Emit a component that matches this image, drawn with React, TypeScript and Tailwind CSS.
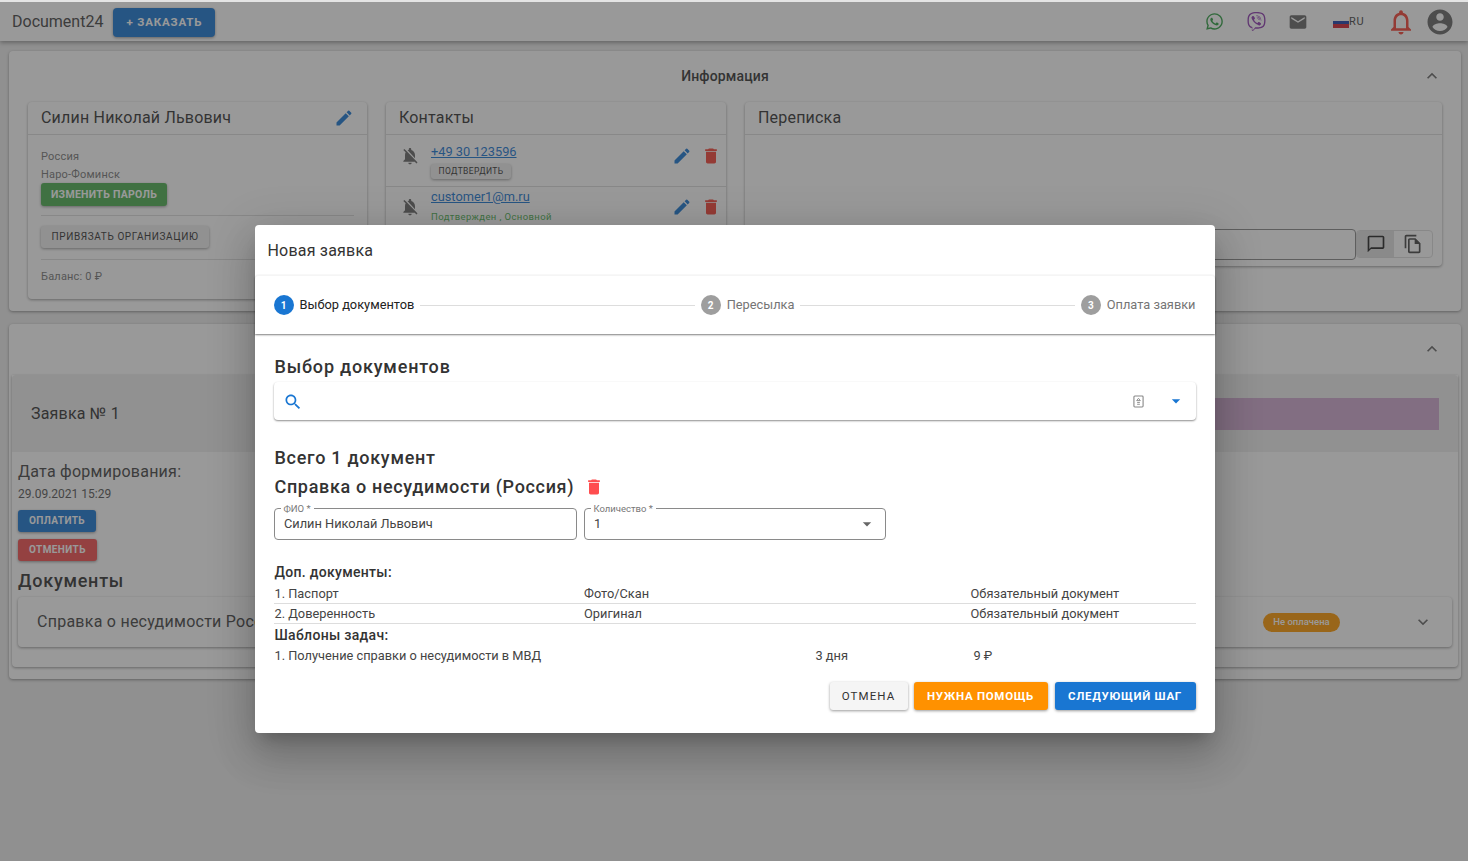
import { FaWhatsapp, FaViber } from 'react-icons/fa';

const paths = {
  edit: 'M3 17.25V21h3.75L17.81 9.94l-3.75-3.75L3 17.25zM20.71 7.04c.39-.39.39-1.02 0-1.41l-2.34-2.34a.9959.9959 0 0 0-1.41 0l-1.83 1.83 3.75 3.75 1.83-1.83z',
  del: 'M6 19c0 1.1.9 2 2 2h8c1.1 0 2-.9 2-2V7H6v12zM19 4h-3.5l-1-1h-5l-1 1H5v2h14V4z',
  bellOff: 'M20 18.69L7.84 6.14 5.27 3.49 4 4.76l2.8 2.8v.01c-.52.99-.8 2.16-.8 3.42v5l-2 2v1h13.73l2 2L21 19.72l-1-1.03zM12 22c1.11 0 2-.89 2-2h-4c0 1.11.89 2 2 2zm6-7.32V11c0-3.08-1.64-5.64-4.5-6.32V4c0-.83-.67-1.5-1.5-1.5s-1.5.67-1.5 1.5v.68c-.15.03-.29.08-.42.12-.1.03-.2.07-.3.11h-.01c-.2.08-.4.18-.6.29L18 14.68z',
  search: 'M15.5 14h-.79l-.28-.27C15.41 12.59 16 11.11 16 9.5 16 5.91 13.09 3 9.5 3S3 5.91 3 9.5 5.91 16 9.5 16c1.61 0 3.09-.59 4.23-1.57l.27.28v.79l5 4.99L20.49 19l-4.99-5zm-6 0C7.01 14 5 11.99 5 9.5S7.01 5 9.5 5 14 7.01 14 9.5 11.99 14 9.5 14z',
  mail: 'M20 4H4c-1.1 0-1.99.9-1.99 2L2 18c0 1.1.9 2 2 2h16c1.1 0 2-.9 2-2V6c0-1.1-.9-2-2-2zm0 4l-8 5-8-5V6l8 5 8-5v2z',
  account: 'M12 2C6.48 2 2 6.48 2 12s4.48 10 10 10 10-4.48 10-10S17.52 2 12 2zm0 3c1.66 0 3 1.34 3 3s-1.34 3-3 3-3-1.34-3-3 1.34-3 3-3zm0 14.2c-2.5 0-4.71-1.28-6-3.22.03-1.99 4-3.08 6-3.08 1.99 0 5.97 1.09 6 3.08-1.29 1.94-3.5 3.22-6 3.22z',
  chat: 'M20 2H4c-1.1 0-2 .9-2 2v18l4-4h14c1.1 0 2-.9 2-2V4c0-1.1-.9-2-2-2zm0 14H6l-2 2V4h16v12z',
  copy: 'M16 1H4c-1.1 0-2 .9-2 2v14h2V3h12V1zm-1 4H8c-1.1 0-1.99.9-1.99 2L6 21c0 1.1.89 2 1.99 2H19c1.1 0 2-.9 2-2V11l-6-6zM8 21V7h6v5h5v9H8z',
  bell: 'M12 22c1.1 0 2-.9 2-2h-4c0 1.1.9 2 2 2zm6-6v-5c0-3.07-1.63-5.64-4.5-6.32V4c0-.83-.67-1.5-1.5-1.5s-1.5.67-1.5 1.5v.68C7.64 5.36 6 7.92 6 11v5l-2 2v1h16v-1l-2-2zm-2 1H8v-6c0-2.48 1.51-4.5 4-4.5s4 2.02 4 4.5v6z',
  drop: 'M7 10l5 5 5-5z',
  less: 'M12 8l-6 6 1.41 1.41L12 10.83l4.59 4.58L18 14z',
  more: 'M16.59 8.59L12 13.17 7.41 8.59 6 10l6 6 6-6z',
};

function Icon({ d, className }: { d: string; className: string }) {
  return (
    <svg viewBox="0 0 24 24" fill="currentColor" className={className}>
      <path d={d} />
    </svg>
  );
}

const raised = 'shadow-[0_1px_3px_rgba(0,0,0,0.4)]';

function Contact({ link, top, iconTop, children }: { link: string; top: string; iconTop: string; children: React.ReactNode }) {
  return (
    <div className="flex items-start h-[52px] pl-[14px] pr-[5px] border-b border-[#ddd] shrink-0">
      <Icon d={paths.bellOff} className={`w-5 h-5 text-[#666] shrink-0 ${iconTop}`} />
      <div className={`ml-[11px] flex-1 min-w-0 ${top}`}>
        <a className="block text-[12.8px] leading-[16px] text-[#1976d2] underline">{link}</a>
        {children}
      </div>
      <Icon d={paths.edit} className={`w-5 h-5 text-[#1976d2] ${iconTop}`} />
      <Icon d={paths.del} className={`w-5 h-5 text-[#f44336] ml-[9px] ${iconTop}`} />
    </div>
  );
}

function CardTitle({ children }: { children: React.ReactNode }) {
  return (
    <div className="h-[33px] flex items-center justify-between pl-[13px] pr-[13px] border-b border-[#ddd] text-[16px] tracking-[0.2px] text-[#333] shrink-0">
      {children}
    </div>
  );
}

function Background() {
  return (
    <div className="w-[1468px] h-[859px] bg-[#ececec] overflow-hidden">
      <header className="h-[39px] bg-white shadow-[0_2px_4px_rgba(0,0,0,0.35)] flex items-center pl-3 pr-[13px]">
        <span className="text-[16px] text-[#444]">Document24</span>
        <button className={`ml-[10px] mt-[2px] h-[29px] w-[102px] rounded bg-[#1976d2] text-white text-[11.5px] font-bold tracking-[0.8px] ${raised}`}>
          + ЗАКАЗАТЬ
        </button>
        <div className="ml-auto flex items-center">
          <FaWhatsapp className="w-[19px] h-[19px] text-[#2e9e43]" />
          <FaViber className="w-[19px] h-[19px] text-[#8e3bb0] ml-[23px]" />
          <Icon d={paths.mail} className="w-[20px] h-[20px] text-[#666] ml-[22px] mt-[1px]" />
          <div className="ml-[25px] w-[16px] h-[11px] flex flex-col mt-[2px]">
            <div className="h-1/3 bg-white" />
            <div className="h-1/3 bg-[#1c3fa8]" />
            <div className="h-1/3 bg-[#d3202f]" />
          </div>
          <span className="text-[11px] text-[#444] tracking-[0.8px] w-[16px] mt-[1px]">RU</span>
          <Icon d={paths.bell} className="w-[30px] h-[30px] text-[#f44336] ml-[21px]" />
          <Icon d={paths.account} className="w-[30px] h-[30px] text-[#666] ml-[9px]" />
        </div>
      </header>

      <section className={`mx-[9px] mt-[10px] w-[1452px] h-[260px] bg-white rounded ${raised} flex flex-col`}>
        <div className="h-[51px] shrink-0 flex items-center justify-center relative pr-[20px]">
          <span className="text-[14px] tracking-[0.15px] font-medium text-[#333]">Информация</span>
          <Icon d={paths.less} className="absolute right-[19px] top-[15px] w-5 h-5 text-[#666]" />
        </div>
        <div className="flex items-start gap-[19px] px-[19px]">
          <div className={`w-[339px] h-[197px] rounded bg-white ${raised} flex flex-col`}>
            <CardTitle>
              Силин Николай Львович
              <Icon d={paths.edit} className="w-5 h-5 text-[#1976d2]" />
            </CardTitle>
            <div className="px-[13px] flex flex-col items-start">
              <span className="text-[11px] tracking-[0.2px] leading-[18px] mt-[13px] text-[#777]">Россия</span>
              <span className="text-[11px] tracking-[0.2px] leading-[18px] text-[#777]">Наро-Фоминск</span>
              <button className={`-mt-[1px] h-[23px] w-[126px] rounded-[3px] bg-[#4caf50] text-white text-[10.5px] font-bold tracking-[0.3px] ${raised}`}>
                ИЗМЕНИТЬ ПАРОЛЬ
              </button>
              <div className="h-px w-full bg-[#ddd] mt-[9px]" />
              <button className={`mt-[10px] h-[22px] pb-[1px] w-[168px] rounded-[3px] bg-[#eeeeee] text-[#333] text-[10px] font-normal tracking-[0.6px] ${raised}`}>
                ПРИВЯЗАТЬ ОРГАНИЗАЦИЮ
              </button>
              <div className="h-px w-full bg-[#ddd] mt-[11px]" />
              <span className="text-[11px] tracking-[0.2px] text-[#777] mt-[9px]">Баланс: 0 ₽</span>
            </div>
          </div>
          <div className={`w-[340px] h-[197px] rounded bg-white ${raised} flex flex-col overflow-hidden`}>
            <CardTitle>Контакты</CardTitle>
            <Contact link="+49 30 123596" top="pt-[9px]" iconTop="mt-[11px]">
              <button className={`block mt-[4px] h-[15px] w-[80px] rounded-[3px] bg-[#eeeeee] text-[#333] text-[8.5px] font-normal tracking-[0.35px] ${raised}`}>
                ПОДТВЕРДИТЬ
              </button>
            </Contact>
            <Contact link="customer1@m.ru" top="pt-[2px]" iconTop="mt-[10px]">
              <span className="block mt-[5px] text-[9.5px] tracking-[0.4px] text-[#4caf50]">Подтвержден , Основной</span>
            </Contact>
          </div>
          <div className={`w-[697px] h-[164px] rounded bg-white ${raised} flex flex-col`}>
            <CardTitle>Переписка</CardTitle>
            <div className="flex-1 flex items-end justify-end pr-[9px] pb-[6px]">
              <div className="w-[300px] h-[31px] border border-[#888] rounded-[4px]" />
              <div className="w-[77px] h-[28px] border border-[#ddd] rounded-[4px] flex mb-[2px] overflow-hidden">
                <div className="w-[37px] bg-[#e0e0e0] flex items-center justify-center">
                  <Icon d={paths.chat} className="w-5 h-5 text-[#222]" />
                </div>
                <div className="flex-1 flex items-center justify-center">
                  <Icon d={paths.copy} className="w-5 h-5 text-[#444]" />
                </div>
              </div>
            </div>
          </div>
        </div>
      </section>

      <section className={`mx-[9px] mt-[13px] w-[1452px] h-[355px] bg-white rounded ${raised} flex flex-col`}>
        <div className="h-[51px] shrink-0 relative">
          <Icon d={paths.less} className="absolute right-[19px] top-[15px] w-5 h-5 text-[#666]" />
        </div>
        <div className={`mx-[3px] h-[292px] rounded-b-sm bg-white ${raised} flex flex-col`}>
          <div className="h-[77px] bg-[#eeeeee] flex items-center justify-between pl-[19px] pr-[19px] rounded-t shrink-0">
            <span className="text-[16px] tracking-[0.2px] text-[#333]">Заявка № 1</span>
            <div className="w-[900px] h-[32px] bg-[#d1a9d1]" />
          </div>
          <div className="px-[6px] flex flex-col items-start">
            <span className="text-[16px] tracking-[0.25px] leading-[20px] text-[#444] mt-[10px]">Дата формирования:</span>
            <span className="text-[12px] leading-[16px] text-[#555] mt-[4px]">29.09.2021 15:29</span>
            <button className={`mt-[8px] h-[22px] pb-[1px] w-[78px] rounded-[3px] bg-[#1976d2] text-white text-[10px] font-bold tracking-[0.4px] ${raised}`}>
              ОПЛАТИТЬ
            </button>
            <button className={`mt-[7px] h-[22px] pb-[1px] w-[79px] rounded-[3px] bg-[#f44f4f] text-white text-[10px] font-bold tracking-[0.4px] ${raised}`}>
              ОТМЕНИТЬ
            </button>
            <span className="text-[18px] tracking-[0.75px] leading-[22px] font-medium text-[#333] mt-[9px]">Документы</span>
            <div className={`mt-[5px] w-[1434px] h-[50px] rounded bg-white ${raised} flex items-center pl-[19px] pr-[19px]`}>
              <span className="text-[16px] tracking-[0.25px] text-[#444]">Справка о несудимости Россия</span>
              <span className="ml-auto w-[77px] h-[19px] rounded-full bg-[#ff9800] text-white text-[9.5px] font-medium flex items-center justify-center">
                Не оплачена
              </span>
              <Icon d={paths.more} className="ml-[73px] w-5 h-5 text-[#666]" />
            </div>
          </div>
        </div>
      </section>
    </div>
  );
}

function Step({ n, label, active }: { n: number; label: string; active?: boolean }) {
  return (
    <div className="flex items-center shrink-0">
      <span className={`w-[20px] h-[20px] rounded-full text-white text-[10px] font-bold flex items-center justify-center ${active ? 'bg-[#1976d2]' : 'bg-[#9e9e9e]'}`}>
        {n}
      </span>
      <span className={`ml-[6px] text-[12.8px] ${active ? 'text-[#222]' : 'text-[#757575]'}`}>{label}</span>
    </div>
  );
}

function Field({ label, width, children }: { label: string; width: string; children: React.ReactNode }) {
  return (
    <div className={`relative h-[32px] ${width} border border-[#8a8a8a] rounded-[4px] flex items-center pl-[9.5px] pr-[9px] text-[12.8px] text-[#444]`}>
      <span className="absolute -top-[6px] left-[6px] bg-white px-[3px] text-[9.5px] leading-[12px] text-[#777]">{label}</span>
      {children}
    </div>
  );
}

function DocRow({ a, b, c }: { a: string; b: string; c: string }) {
  return (
    <div className="h-[20px] border-b border-[#ddd] grid grid-cols-[309.5px_386.5px_1fr] items-start leading-[19px] text-[12.8px] text-[#444]">
      <span className="pl-[1px]">{a}</span>
      <span className="pl-[1px]">{b}</span>
      <span className="pl-[1px]">{c}</span>
    </div>
  );
}

const heading = 'pl-[1px] text-[18px] leading-[22px] font-medium text-[#333]';
const subheading = 'pl-[1px] text-[14px] tracking-[0.3px] leading-[18px] font-medium text-[#333]';
const actionButton = 'h-[28px] pt-[1px] rounded-[3px] text-[11.5px]';

function Dialog() {
  return (
    <div className="ml-[1px] w-[960px] h-[508px] bg-white rounded shadow-[0_11px_15px_-7px_rgba(0,0,0,0.2),0_24px_38px_3px_rgba(0,0,0,0.14),0_9px_46px_8px_rgba(0,0,0,0.12)] flex flex-col">
      <div className="h-[50px] pt-[1px] shrink-0 flex items-center pl-[13px] text-[16px] tracking-[0.2px] text-[#333]">Новая заявка</div>
      <div className="h-[59px] shrink-0 flex items-center pl-[19px] pr-[19px] rounded-t border-t border-[#f5f5f5] shadow-[0_1px_2px_rgba(0,0,0,0.5)]">
        <Step n={1} label="Выбор документов" active />
        <div className="flex-1 h-px bg-[#ddd] mx-[6px]" />
        <Step n={2} label="Пересылка" />
        <div className="flex-1 h-px bg-[#ddd] mx-[6px]" />
        <Step n={3} label="Оплата заявки" />
      </div>
      <div className="px-[19px] flex flex-col flex-1">
        <h2 className={`${heading} tracking-[0.8px] mt-[22px]`}>Выбор документов</h2>
        <div className="mt-[4px] h-[38px] shrink-0 rounded bg-white shadow-[0_1px_2px_rgba(0,0,0,0.45)] flex items-center pl-[9px] pr-[10px]">
          <Icon d={paths.search} className="w-[20px] h-[20px] text-[#1976d2] mt-[1px]" />
          <svg viewBox="0 0 12 14" className="ml-auto w-[11px] h-[13px] text-[#888]" fill="none" stroke="currentColor">
            <rect x="1" y="1" width="10" height="12" rx="1" strokeWidth="1.2" />
            <path d="M6 3.5 8 6H4zM4.5 8h3M4.5 10h3" strokeWidth="1" />
          </svg>
          <Icon d={paths.drop} className="ml-[22px] w-5 h-5 text-[#1976d2]" />
        </div>
        <h2 className={`${heading} tracking-[0.72px] mt-[27px]`}>Всего 1 документ</h2>
        <div className="flex items-center mt-[7px]">
          <h3 className={`${heading} tracking-[0.66px]`}>Справка о несудимости (Россия)</h3>
          <Icon d={paths.del} className="ml-[10px] w-[20px] h-[20px] text-[#ff4d4f]" />
        </div>
        <div className="flex gap-[7px] mt-[10px]">
          <Field label="ФИО *" width="w-[303px]">Силин Николай Львович</Field>
          <Field label="Количество *" width="w-[302px]">
            1
            <Icon d={paths.drop} className="ml-auto -mr-[1px] w-5 h-5 text-[#666]" />
          </Field>
        </div>
        <div className={`${subheading} mt-[23px]`}>Доп. документы:</div>
        <div className="mt-[3px]">
          <DocRow a="1. Паспорт" b="Фото/Скан" c="Обязательный документ" />
          <DocRow a="2. Доверенность" b="Оригинал" c="Обязательный документ" />
        </div>
        <div className={`${subheading} mt-[2px]`}>Шаблоны задач:</div>
        <div className="mt-[2px] h-[20px] grid grid-cols-[541px_159px_1fr] items-center text-[12.8px] text-[#444]">
          <span className="pl-[1px]">1. Получение справки о несудимости в МВД</span>
          <span className="pl-[1px]">3 дня</span>
          <span>9 ₽</span>
        </div>
        <div className="flex justify-end gap-[6px] mt-[16px]">
          <button className={`${actionButton} w-[78px] bg-[#f5f5f5] text-[#333] font-normal tracking-[1.1px] ${raised}`}>ОТМЕНА</button>
          <button className={`${actionButton} w-[134px] bg-[#ff9100] text-white font-bold tracking-[0.7px] ${raised}`}>НУЖНА ПОМОЩЬ</button>
          <button className={`${actionButton} w-[141px] bg-[#1976d2] text-white font-bold tracking-[0.7px] ml-[1px] ${raised}`}>СЛЕДУЮЩИЙ ШАГ</button>
        </div>
      </div>
    </div>
  );
}

export default function App() {
  return (
    <div className="relative w-[1468px] h-[861px] overflow-hidden bg-[#e4e4e4] pt-[2px] font-['Roboto',sans-serif]">
      <Background />
      {/* modal backdrop */}
      <div className="absolute inset-x-0 bottom-0 top-[2px] bg-[#333333]/50 flex justify-center pt-[223px]">
        <Dialog />
      </div>
    </div>
  );
}
